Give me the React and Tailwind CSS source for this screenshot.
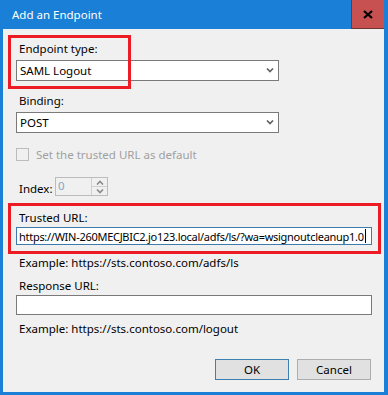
import React from 'react';

const font = { fontFamily: '"Segoe UI", "Noto Sans", sans-serif' };

function Chevron({ up = false, className = '' }) {
  return (
    <svg width="8" height="5" viewBox="0 0 8 5" className={className}>
      <polyline
        points={up ? '1,4.5 4,1.5 7,4.5' : '1,0.5 4,3.5 7,0.5'}
        fill="none"
        stroke="currentColor"
        strokeWidth="1.6"
      />
    </svg>
  );
}

function Combo({ value }) {
  return (
    <div className="ml-[8px] w-[263px] h-[21px] bg-white border border-[#7a7a7a] flex items-center pl-[3px] pr-[4px] text-[11.5px] text-black">
      <span className="flex-1 leading-none">{value}</span>
      <Chevron className="text-[#606060]" />
    </div>
  );
}

function Label({ children, className = '' }) {
  return <div className={`ml-[11px] h-[15px] leading-[15px] text-[11.5px] text-black ${className}`}>{children}</div>;
}

export default function App() {
  return (
    <div className="w-[388px] h-[395px] bg-[#1a7fd6] flex flex-col pl-[3px] pr-[4px] pb-[3px] select-none" style={font}>
      {/* title bar */}
      <div className="h-[29px] flex items-stretch shrink-0">
        <div className="flex-1 flex items-center pl-[9px] text-[11.5px] text-white">Add an Endpoint</div>
        <div className="w-[33px] bg-[#c75050] border-l border-b border-[#6e3535] flex items-center justify-center">
          <svg width="10" height="9" viewBox="0 0 10 9">
            <path d="M1 1 L9 8 M9 1 L1 8" stroke="#000" strokeWidth="2.2" />
          </svg>
        </div>
      </div>

      {/* body */}
      <div className="relative flex-1 bg-[#f0f0f0] flex flex-col pl-[5px] pr-[3px]">
        <Label className="mt-[12px]">Endpoint type:</Label>
        <div className="mt-[4px]">
          <Combo value="SAML Logout" />
        </div>

        <Label className="mt-[12px]">Binding:</Label>
        <div className="mt-[4px]">
          <Combo value="POST" />
        </div>

        <div className="mt-[15px] ml-[8px] flex items-center h-[13px]">
          <div className="w-[13px] h-[13px] border border-[#bcbcbc] bg-[#f0f0f0]" />
          <span className="ml-[7px] text-[11.5px] text-[#a0a0a0] leading-none">Set the trusted URL as default</span>
        </div>

        <div className="mt-[16px] ml-[11px] flex items-end h-[19px]">
          <span className="text-[11.5px] text-black leading-[15px] w-[36px]">Index:</span>
          <div className="w-[53px] h-[19px] border border-[#bcbcbc] bg-[#f0f0f0] flex">
            <span className="flex-1 pl-[2px] text-[11.5px] leading-[15px] text-[#8aa6c4]">0</span>
            <div className="w-[16px] flex flex-col border-l border-[#d0d0d0]">
              <div className="flex-1 flex items-center justify-center border-b border-[#d0d0d0] text-[#8a8a8a]">
                <Chevron up />
              </div>
              <div className="flex-1 flex items-center justify-center text-[#8a8a8a]">
                <Chevron />
              </div>
            </div>
          </div>
        </div>

        {/* Trusted URL highlight */}
        <div className="mt-[7px] border-[3px] border-[#ed1c24] pl-[5px] pr-[6px] pt-[4px] pb-[6px]">
          <div className="ml-[3px] h-[15px] leading-[15px] text-[11.5px] text-black">Trusted URL:</div>
          <div className="mt-[2px] h-[18px] bg-white border border-[#3d7bad] flex items-center pl-[2px] overflow-hidden">
            <span className="text-[11px] leading-none text-black whitespace-nowrap tracking-[-0.28px]">
              https://WIN-260MECJBIC2.jo123.local/adfs/ls/?wa=wsignoutcleanup1.0
            </span>
            <span className="ml-[1px] w-px h-[14px] bg-black shrink-0" />
          </div>
        </div>

        <Label className="mt-[1px]">Example: https://sts.contoso.com/adfs/ls</Label>

        <Label className="mt-[8px]">Response URL:</Label>
        <div className="mt-[2px] ml-[8px] w-[356px] h-[20px] bg-white border border-[#7a7a7a]" />

        <Label className="mt-[6px]">Example: https://sts.contoso.com/logout</Label>

        <div className="mt-[23px] flex justify-end gap-[8px] pr-[10px]">
          <button className="w-[74px] h-[21px] bg-[#e1e1e1] border border-[#3c7fb1] text-[11.5px] text-black leading-none">OK</button>
          <button className="w-[74px] h-[21px] bg-[#e1e1e1] border border-[#adadad] text-[11.5px] text-black leading-none">Cancel</button>
        </div>

        {/* Endpoint type highlight */}
        <div className="absolute left-[5px] top-[6px] w-[123px] h-[54px] border-[3px] border-[#ed1c24] pointer-events-none" />
      </div>
    </div>
  );
}
